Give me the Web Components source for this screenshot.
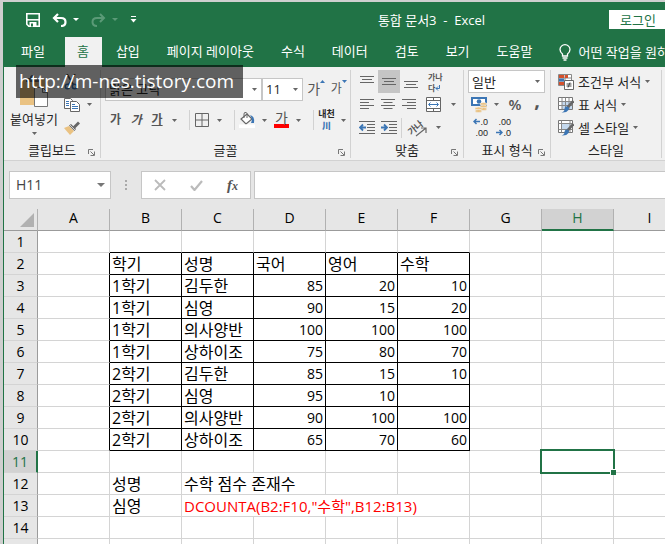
<!DOCTYPE html>
<html lang="ko">
<head>
<meta charset="utf-8">
<title>통합 문서3 - Excel</title>
<style>
  body {
    margin: 0;
    overflow: hidden;
    font-family: "Open Sans", "Noto Sans CJK KR", sans-serif;
    font-size: 13px;
    line-height: 18px;
    color: #262626;
    --green: #217346;
    --line: #d4d4d4;
  }
</style>
</head>
<body>
<excel-window>
  <title-bar>통합 문서3&nbsp; -&nbsp; Excel</title-bar>
  <ribbon-tabs></ribbon-tabs>
  <ribbon-bar></ribbon-bar>
  <formula-bar></formula-bar>
  <sheet-grid></sheet-grid>
</excel-window>
<site-mark>http://m-nes.tistory.com</site-mark>

<script>
const icons = {
  save: [14, 14, `<path d="M.8.8h12.4v12.4H2.8l-2-2z" fill="none" stroke="#fff" stroke-width="1.6"/><path d="M1 6.8h12" stroke="#fff" stroke-width="1.5"/><path d="M3.5 9h7v4.5h-7z" fill="#fff"/><path d="M5 10.5h2v3H5z" fill="#217346"/>`],
  undo: [15, 14, `<path d="M6 1 2 5l4 4M2.500 5H9q4.500 0 4.500 4T9 13" fill="none" stroke="#fff" stroke-width="2.200"/>`],
  redo: [15, 14, `<path d="m9 1 4 4-4 4M12.500 5H6Q1.500 5 1.500 9T6 13" fill="none" stroke="#5b9a77" stroke-width="2"/>`],
  custom: [7, 7, `<path d="M1 .5h5" stroke="#fff"/><path d="M.5 3h6l-3 3.500z" fill="#fff"/>`],
  bulb: [12, 17, `<path d="M3.500 12V10Q1 8 1 5.500a5 4.800 0 0 1 10 0Q11 8 8.500 10v2zM3.500 14h5M4.500 16h3" fill="none" stroke="#fff" stroke-width="1.300"/>`],
  paste: [28, 32, `<path d="M0 4h25v26H0z" fill="#eac282"/><path d="M6 7V3h4q0-3 2.500-3T15 3h4v4z" fill="#666"/><path d="M14.500 12.500h8l5 5v14h-13z" fill="#fff" stroke="#777"/><path d="M22.500 12.500v5h5" fill="none" stroke="#777"/>`],
  cut: [14, 16, `<path d="m3 0 6.500 11M11 0 4.500 11" stroke="#555" stroke-width="1.700"/><g fill="none" stroke="#3c76b5" stroke-width="1.500"><circle cx="3.500" cy="12.500" r="2.200"/><circle cx="10.500" cy="12.500" r="2.200"/></g>`],
  copy: [16, 14, `<g fill="#fff" stroke="#666"><path d="M.5.5h6l2 2v8h-8z"/><path d="M6.500 3.500h6l3 3v7h-9z"/></g><path d="M2 3.500h3M2 5.500h3M2 7.500h3M8 6.500h3M8 8.500h6M8 10.500h6" stroke="#3c76b5"/>`],
  painter: [16, 14, `<path d="m0 7 5-2 5 5-4 4z" fill="#eac282"/><path d="m5 4.500 2-1.500 5 5-1.500 2z" fill="#666"/><path d="m9 5.500 5-5 2 2-5 5z" fill="#666"/><path d="m6 4 5 5" stroke="#fff" stroke-width=".7"/>`],
  borders: [14, 14, `<path d="M.5.5h13v13H.5zM7 .5v13M.5 7h13" fill="none" stroke="#666"/>`],
  fill: [16, 16, `<path d="m8 2 5 5-6 5-5-5z" fill="#fff" stroke="#666" stroke-width="1.200"/><path d="M5 6V2q0-2 2-1.500T8 4v2" fill="none" stroke="#666"/><path d="M11 3q5 1 4 8l-3 0q2-4-1-8z" fill="#3c76b5"/><path d="M0 12.500h16v3.500H0z" fill="#fff"/>`],
  top: [14, 14, `<path d="M0 1.500h14M2 4.500h10M0 7.500h14" stroke="#666"/>`],
  middle: [14, 14, `<path d="M0 3.500h14M2 6.500h10M0 9.500h14" stroke="#666"/>`],
  bottom: [14, 14, `<path d="M0 6.500h14M2 9.500h10M0 12.500h14" stroke="#666"/>`],
  left: [14, 14, `<path d="M0 1.500h14M0 4.500h9M0 7.500h14M0 10.500h9" stroke="#666"/>`],
  center: [14, 14, `<path d="M0 1.500h14M2.500 4.500h9M0 7.500h14M2.500 10.500h9" stroke="#666"/>`],
  right: [14, 14, `<path d="M0 1.500h14M5 4.500h9M0 7.500h14M5 10.500h9" stroke="#666"/>`],
  outdent: [16, 13, `<path d="M0 .5h16M8 3.500h8M8 6.500h8M8 9.500h8M0 12.500h16" stroke="#666"/><path d="M7 6.500H1m3-3-3 3 3 3" fill="none" stroke="#3c76b5" stroke-width="1.800"/>`],
  indent: [16, 13, `<path d="M0 .5h16M8 3.500h8M8 6.500h8M8 9.500h8M0 12.500h16" stroke="#666"/><path d="M0 6.500h6M3 3.500l3 3-3 3" fill="none" stroke="#3c76b5" stroke-width="1.800"/>`],
  merge: [15, 15, `<path d="M.5.5h14v14H.5zM.5 3.500h14M.5 11.500h14M7.500.5v3M7.500 11.500v3" fill="#fff" stroke="#666"/><path d="M3 7.500h9M4.500 5.500l-2 2 2 2M10.500 5.500l2 2-2 2" fill="none" stroke="#3c76b5"/>`],
  enter: [5, 6, `<path d="M4.500 0v3.500H1M3 1.500l-2 2 2 2" fill="none" stroke="#3c76b5"/>`],
  slant: [12, 10, `<path d="m1 9 10-8M6 1h5v5" fill="none" stroke="#666" stroke-width="1.200"/>`],
  money: [17, 17, `<path d="M0 1h16v9H0z" fill="#3c76b5"/><path d="M2 3h12v5H2z" fill="#fff"/><circle cx="8" cy="5.500" r="2.300" fill="#3c76b5"/><g fill="#eac282" stroke="#f1f1f1" stroke-width=".6"><ellipse cx="12.500" cy="8" rx="3.500" ry="1.500"/><ellipse cx="12.500" cy="10.500" rx="3.500" ry="1.500"/><ellipse cx="12.500" cy="13" rx="3.500" ry="1.500"/><ellipse cx="7.500" cy="12.500" rx="3.500" ry="1.500"/><ellipse cx="7.500" cy="15" rx="3.500" ry="1.500"/></g>`],
  toLeft: [7, 7, `<path d="M7 3.500H1M3.500 1 1 3.500 3.500 6" fill="none" stroke="#3c76b5" stroke-width="1.500"/>`],
  toRight: [7, 7, `<path d="M0 3.500h6M3.500 1 6 3.500 3.500 6" fill="none" stroke="#3c76b5" stroke-width="1.500"/>`],
  cond: [16, 16, `<path d="M.5.500h13v11H.5zM.5 4h13M.5 8h13M7 .5v11" fill="#fff" stroke="#888"/><path d="M1 1h5v3H1zM1 8h5v3H1z" fill="#d4502c"/><path d="M7 1h3v3H7z" fill="#d4502c"/><path d="M1 4.500h5v3H1z" fill="#3c76b5"/><path d="M6.500 6.500h9v9h-9z" fill="#fff" stroke="#666"/><path d="M8.500 10h5M8.500 12h5M12 8.500l-2 5" stroke="#444"/>`],
  table: [16, 16, `<path d="M.5.500h14v12H.5z" fill="#fff" stroke="#777"/><path d="M4 5h10v7H4z" fill="#c5d9ee"/><path d="M.5 4.500h14M.5 8.500h14M4 .5v12M7.500.5v12M11 .5v12" stroke="#888"/><path d="m15.500 4-6 6.500" stroke="#666" stroke-width="2.600"/><path d="M9 9.500q3 1 1.500 3.500-2 3-7 2.500 3-1 3-3.500T9 9.500" fill="#3c76b5"/>`],
  cell: [16, 16, `<path d="M.5.500h14v12H.5z" fill="#fff" stroke="#777"/><path d="M3.500 3.500h9v6h-9z" fill="#c5d9ee"/><path d="M.5 3.500h14M3.500.5v12M.5 9.500h14M12 .5v12" stroke="#888" fill="none"/><path d="m15.500 4-6 6.500" stroke="#666" stroke-width="2.600"/><path d="M9 9.500q3 1 1.500 3.500-2 3-7 2.500 3-1 3-3.500T9 9.500" fill="#3c76b5"/>`],
  launcher: [7, 7, `<path d="M.5 5V.500H5" fill="none" stroke="#777"/><path d="M2.500 2.500 6 6M6.500 2.500v4h-4" fill="none" stroke="#777"/>`],
  arrow: [5, 3, `<path d="M0 0h5L2.500 3z" fill="#666"/>`],
  bigArrow: [8, 4, `<path d="M0 0h8L4 4z" fill="#777"/>`],
  up: [5, 3, `<path d="M0 3h5L2.500 0z" fill="#3c76b5"/>`],
  down: [5, 3, `<path d="M0 0h5L2.500 3z" fill="#3c76b5"/>`],
  cancel: [12, 12, `<path d="m1 1 10 10M11 1 1 11" stroke="#bbb" stroke-width="1.800"/>`],
  ok: [13, 11, `<path d="m1 6 3.500 4L12 1" fill="none" stroke="#bbb" stroke-width="2.200"/>`],
  corner: [14, 14, `<path d="M14 0v14H0z" fill="#b1b1b1"/>`],
};

class UiIcon extends HTMLElement {
  connectedCallback() {
    const [w, h, body] = icons[this.getAttribute('name')];
    this.attachShadow({ mode: 'open' }).innerHTML = `
      <style>
        :host { display: inline-flex; flex: none; }
        svg { display: block; }
      </style>
      <svg width="${w}" height="${h}" viewBox="0 0 ${w} ${h}" aria-hidden="true">${body}</svg>`;
  }
}

class ExcelWindow extends HTMLElement {
  constructor() {
    super();
    this.attachShadow({ mode: 'open' }).innerHTML = `
      <style>
        :host {
          display: flex;
          flex-direction: column;
          box-sizing: border-box;
          height: 100vh;
          border: solid #cfcfcf;
          border-width: 2px 0 0 3px;
        }
        .frame {
          display: flex;
          flex-direction: column;
          flex: 1;
          min-height: 0;
          overflow: hidden;
          border-left: 1px solid var(--green);
        }
      </style>
      <div class="frame"><slot></slot></div>`;
  }
}

class TitleBar extends HTMLElement {
  constructor() {
    super();
    this.attachShadow({ mode: 'open' }).innerHTML = `
      <style>
        :host {
          display: flex;
          align-items: center;
          height: 35px;
          flex: none;
          color: #fff;
          background: var(--green);
        }
        .tools {
          display: flex;
          align-items: center;
          flex: 0 0 250px;
          box-sizing: border-box;
          padding-left: 22px;
        }
        button {
          display: flex;
          align-items: center;
          gap: 6px;
          padding: 0;
          margin-right: 12px;
          border: 0;
          background: none;
        }
        .title { flex: 1; text-align: center; }
        .login {
          flex: none;
          width: 56px;
          height: 19px;
          padding-left: 11px;
          margin: 0;
          font: inherit;
          line-height: 18px;
          color: var(--green);
          background: #fff;
        }
        i { border: solid transparent; border-width: 3px 3px 0; border-top-color: #fff; }
        .off i { border-top-color: #5b9a77; }
      </style>
      <div class="tools">
        <button aria-label="저장"><ui-icon name="save"></ui-icon></button>
        <button aria-label="실행 취소">
          <ui-icon name="undo"></ui-icon><i></i>
        </button>
        <button aria-label="다시 실행" class="off">
          <ui-icon name="redo"></ui-icon><i></i>
        </button>
        <button aria-label="도구 모음 사용자 지정"><ui-icon name="custom"></ui-icon></button>
      </div>
      <span class="title"><slot></slot></span>
      <button class="login">로그인</button>`;
  }
}

class RibbonTabs extends HTMLElement {
  constructor() {
    super();
    this.attachShadow({ mode: 'open' }).innerHTML = `
      <style>
        :host {
          display: flex;
          flex: none;
          height: 30px;
          overflow: hidden;
          white-space: nowrap;
          background: var(--green);
        }
        a {
          flex: none;
          padding: 0 13px 0 14px;
          line-height: 28px;
          color: #fff;
          text-decoration: none;
        }
        a.file { padding: 0 20px 0 17px; }
        a.active { padding: 0 13px 0 12px; color: var(--green); background: #f1f1f1; }
        a.tell { display: flex; align-items: center; gap: 7px; padding-right: 0; }
      </style>
      <a href="#" class="file">파일</a>
      <a href="#" class="active">홈</a>
      <a href="#">삽입</a>
      <a href="#">페이지 레이아웃</a>
      <a href="#">수식</a>
      <a href="#">데이터</a>
      <a href="#">검토</a>
      <a href="#">보기</a>
      <a href="#">도움말</a>
      <a href="#" class="tell"><ui-icon name="bulb"></ui-icon>어떤 작업을 원하</a>`;
  }
}

class RibbonGroup extends HTMLElement {
  connectedCallback() {
    const launcher = this.hasAttribute('plain') ? '' : '<button aria-label="자세히"><ui-icon name="launcher"></ui-icon></button>';
    this.attachShadow({ mode: 'open' }).innerHTML = `
      <style>
        :host {
          display: flex;
          flex-direction: column;
          flex: none;
          box-sizing: border-box;
          height: 88px;
          border-right: 1px solid #d2d2d2;
        }
        .body { flex: 1; }
        .foot { display: grid; grid-template-columns: 12px 1fr 12px; align-items: center; line-height: 16px; }
        .label { grid-column: 2; text-align: center; }
        button { display: flex; padding: 4px 0 0; border: 0; background: none; }
      </style>
      <div class="body"><slot></slot></div>
      <div class="foot"><span class="label">${this.getAttribute('label')}</span>${launcher}</div>`;
  }
}

class RibbonBar extends HTMLElement {
  constructor() {
    super();
    this.attachShadow({ mode: 'open' }).innerHTML = `
      <style>
        :host {
          display: flex;
          flex: none;
          box-sizing: border-box;
          height: 94px;
          padding-top: 3px;
          overflow: hidden;
          background: #f1f1f1;
          border-bottom: 1px solid #d2d2d2;
        }
        button, select { font: inherit; color: inherit; }
        button {
          display: inline-flex;
          align-items: center;
          justify-content: center;
          padding: 0;
          border: 0;
          background: none;
          white-space: nowrap;
        }
        .row { display: flex; align-items: center; height: 23px; }
        .sep { width: 1px; height: 20px; background: #d2d2d2; }
        .box { display: grid; align-items: center; }
        .box > * { grid-area: 1 / 1; }
        .box ui-icon { justify-self: end; margin-right: 5px; pointer-events: none; }
        select {
          width: 100%;
          height: 23px;
          box-sizing: border-box;
          padding: 0 3px;
          border: 1px solid #c6c6c6;
          border-radius: 0;
          appearance: none;
          background: #fff;
        }

        .clip { width: 97px; }
        .clip-in { display: grid; grid-template-columns: 58px 1fr; }
        .paste { flex-direction: column; gap: 3px; padding-left: 2px; }
        .paste ui-icon:last-child { margin-top: 1px; }
        .side { display: flex; flex-direction: column; align-items: flex-start; padding-left: 2px; }
        .side button { height: 23px; gap: 7px; }

        .font { width: 250px; }
        .fonts { height: 22px; padding: 8px 0 0 4px; }
        .name { flex: 0 0 157px; }
        .size { flex: 0 0 41px; }
        .fonts button { align-items: flex-start; width: 24px; margin-left: 2px; font-size: 14px; color: #555; }
        .fonts button + button { margin: 0; }
        .fonts .small { font-size: 12px; }
        .style { height: 22px; padding: 9px 0 0 4px; }
        .style button { width: 22px; height: 20px; }
        .style .drop { width: 14px; }
        .style .sep { margin: 0 2px 0 8px; }
        .ga { font-size: 12px; font-weight: bold; line-height: 14px; color: #555; }
        .red { border-bottom: 4px solid #f00; font-size: 14px; line-height: 12px; padding: 0 1px; color: #555; }
        .style .text { height: 24px; font-size: 9px; line-height: 12px; flex-direction: column; font-weight: bold; }
        .text b { color: #3c76b5; }

        .align { width: 113px; }
        .align .row { padding-left: 5px; }
        .align button { width: 22px; height: 23px; }
        .align .on { background: #c5c5c5; }
        .align .wrap { width: 20px; margin-left: 6px; font-size: 8px; font-weight: bold; line-height: 11px; color: #555; text-align: left; display: block; }
        .align .merge { width: 20px; margin-left: 4px; }
        .align .drop { width: 20px; }
        .align .sep { margin: 0 4px 0 1px; }
        .tilts { display: grid; justify-items: start; }
        .tilts > * { grid-area: 1 / 1; }
        .tilts ui-icon { margin: 8px 0 0 8px; }
        .tilt { font-size: 9px; font-weight: bold; line-height: 9px; color: #555; transform: rotate(-40deg); }

        .num { width: 87px; }
        .num .row { padding: 0 5px 0 4px; }
        .num .box { flex: 1; }
        .num button { margin-left: 3px; }
        .num .drop { width: 16px; margin: 0; }
        .num .pct { width: 22px; padding-bottom: 2px; margin: 0; font-size: 15px; font-weight: 600; color: #555; }
        .num .comma { width: 16px; padding-bottom: 10px; font-size: 20px; font-weight: bold; color: #555; }
        .num .dec { display: block; width: 17px; font: 9px/11px "Liberation Sans", sans-serif; text-align: right; }
        .num .dec + .dec { margin-left: 6px; }

        .look { width: 111px; }
        .look .row { padding-left: 7px; }
        .look button { gap: 4px; }
      </style>
      <ribbon-group class="clip" label="클립보드">
        <div class="clip-in">
          <button class="paste"><ui-icon name="paste"></ui-icon>붙여넣기<ui-icon name="arrow"></ui-icon></button>
          <div class="side">
            <button aria-label="잘라내기"><ui-icon name="cut"></ui-icon></button>
            <button aria-label="복사"><ui-icon name="copy"></ui-icon><ui-icon name="arrow"></ui-icon></button>
            <button aria-label="서식 복사"><ui-icon name="painter"></ui-icon></button>
          </div>
        </div>
      </ribbon-group>
      <ribbon-group class="font" label="글꼴">
        <div class="row fonts">
          <span class="box name"><select aria-label="글꼴"><option>맑은 고딕</option></select><ui-icon name="arrow"></ui-icon></span>
          <span class="box size"><select aria-label="글꼴 크기"><option>11</option></select><ui-icon name="arrow"></ui-icon></span>
          <button>가<ui-icon name="up"></ui-icon></button>
          <button class="small">가<ui-icon name="down"></ui-icon></button>
        </div>
        <div class="row style">
          <button class="ga">가</button>
          <button class="ga"><i>가</i></button>
          <button class="ga"><u>가</u></button>
          <button class="drop" aria-label="밑줄"><ui-icon name="arrow"></ui-icon></button>
          <span class="sep"></span>
          <button aria-label="테두리"><ui-icon name="borders"></ui-icon></button>
          <button class="drop" aria-label="테두리 종류"><ui-icon name="arrow"></ui-icon></button>
          <span class="sep"></span>
          <button aria-label="채우기 색"><ui-icon name="fill"></ui-icon></button>
          <button class="drop" aria-label="채우기 색 종류"><ui-icon name="arrow"></ui-icon></button>
          <button><span class="red">가</span></button>
          <button class="drop" aria-label="글꼴 색"><ui-icon name="arrow"></ui-icon></button>
          <span class="sep"></span>
          <button class="text">내천<b>川</b></button>
          <button class="drop" aria-label="윗주"><ui-icon name="arrow"></ui-icon></button>
        </div>
      </ribbon-group>
      <ribbon-group class="align" label="맞춤">
        <div class="row">
          <button aria-label="위쪽 맞춤"><ui-icon name="top"></ui-icon></button>
          <button aria-label="가운데 맞춤" class="on"><ui-icon name="middle"></ui-icon></button>
          <button aria-label="아래쪽 맞춤"><ui-icon name="bottom"></ui-icon></button>
          <button class="wrap">가나<br>다<ui-icon name="enter"></ui-icon></button>
        </div>
        <div class="row">
          <button aria-label="왼쪽"><ui-icon name="left"></ui-icon></button>
          <button aria-label="가운데"><ui-icon name="center"></ui-icon></button>
          <button aria-label="오른쪽"><ui-icon name="right"></ui-icon></button>
          <button class="merge" aria-label="병합"><ui-icon name="merge"></ui-icon></button>
          <button class="drop" aria-label="병합 종류"><ui-icon name="arrow"></ui-icon></button>
        </div>
        <div class="row">
          <button aria-label="내어쓰기"><ui-icon name="outdent"></ui-icon></button>
          <button aria-label="들여쓰기"><ui-icon name="indent"></ui-icon></button>
          <span class="sep"></span>
          <button class="tilts"><span class="tilt">가나</span><ui-icon name="slant"></ui-icon></button>
          <button class="drop" aria-label="방향"><ui-icon name="arrow"></ui-icon></button>
        </div>
      </ribbon-group>
      <ribbon-group class="num" label="표시 형식">
        <div class="row">
          <span class="box"><select aria-label="표시 형식"><option>일반</option></select><ui-icon name="arrow"></ui-icon></span>
        </div>
        <div class="row">
          <button aria-label="회계"><ui-icon name="money"></ui-icon></button>
          <button class="drop" aria-label="통화"><ui-icon name="arrow"></ui-icon></button>
          <button class="pct">%</button>
          <button class="comma">,</button>
        </div>
        <div class="row">
          <button class="dec"><ui-icon name="toLeft"></ui-icon>.0<br>.00</button>
          <button class="dec">.00<br><ui-icon name="toRight"></ui-icon>.0</button>
        </div>
      </ribbon-group>
      <ribbon-group class="look" label="스타일" plain>
        <div class="row"><button><ui-icon name="cond"></ui-icon>조건부 서식<ui-icon name="arrow"></ui-icon></button></div>
        <div class="row"><button><ui-icon name="table"></ui-icon>표 서식<ui-icon name="arrow"></ui-icon></button></div>
        <div class="row"><button><ui-icon name="cell"></ui-icon>셀 스타일<ui-icon name="arrow"></ui-icon></button></div>
      </ribbon-group>`;
  }
}

class FormulaBar extends HTMLElement {
  constructor() {
    super();
    this.attachShadow({ mode: 'open' }).innerHTML = `
      <style>
        :host {
          display: flex;
          flex: none;
          height: 28px;
          padding: 10px 0 10px 5px;
          background: #e6e6e6;
        }
        .name, .tools, .formula {
          display: flex;
          align-items: center;
          box-sizing: border-box;
          border: 1px solid #c6c6c6;
          background: #fff;
        }
        .name { width: 102px; padding-right: 5px; }
        .tools { width: 110px; justify-content: space-between; padding: 0 12px; }
        .formula { flex: 1; margin-left: 3px; border-right: 0; }
        input {
          flex: 1;
          min-width: 0;
          padding: 0 6px;
          border: 0;
          background: none;
          font: inherit;
          font-size: 14px;
          color: #444;
          outline: 0;
        }
        button { display: flex; padding: 0; border: 0; background: none; }
        .fx { font: italic bold 15px "Liberation Serif", serif; color: #555; }
        .fx small { font-size: 12px; align-self: flex-end; }
        .dots { display: grid; align-content: center; gap: 2px; margin: 0 14px; }
        .dots i { width: 2px; height: 2px; background: #aaa; }
      </style>
      <div class="name">
        <input aria-label="이름 상자" value="H11">
        <button aria-label="이름 목록"><ui-icon name="bigArrow"></ui-icon></button>
      </div>
      <div class="dots"><i></i><i></i><i></i></div>
      <div class="tools">
        <button aria-label="취소"><ui-icon name="cancel"></ui-icon></button>
        <button aria-label="입력"><ui-icon name="ok"></ui-icon></button>
        <button class="fx">f<small>x</small></button>
      </div>
      <div class="formula"><input aria-label="수식 입력줄"></div>`;
  }
}

const COLS = 'ABCDEFGHI';
const LAST_ROW = 15;
const data = {
  2: ['학기', '성명', '국어', '영어', '수학'],
  3: ['1학기', '김두한', 85, 20, 10],
  4: ['1학기', '심영', 90, 15, 20],
  5: ['1학기', '의사양반', 100, 100, 100],
  6: ['1학기', '상하이조', 75, 80, 70],
  7: ['2학기', '김두한', 85, 15, 10],
  8: ['2학기', '심영', 95, 10, ''],
  9: ['2학기', '의사양반', 90, 100, 100],
  10: ['2학기', '상하이조', 65, 70, 60],
};

class SheetGrid extends HTMLElement {
  constructor() {
    super();
    this.attachShadow({ mode: 'open' }).innerHTML = `
      <style>
        :host {
          display: block;
          flex: 1;
          overflow: hidden;
          background: #fff;
        }
        table {
          width: 682px;
          table-layout: fixed;
          border-spacing: 0;
          color: #000;
        }
        col { width: 72px; }
        col:first-child { width: 34px; }
        th, td {
          box-sizing: border-box;
          height: 22px;
          padding: 0 2px;
          line-height: 20px;
          white-space: nowrap;
          border: solid var(--line);
          border-width: 0 1px 1px 0;
        }
        th {
          font-size: 14px;
          font-weight: normal;
          background: #e6e6e6;
          border-right-color: #9b9b9b;
        }
        thead th {
          padding-bottom: 4px;
          border-right-color: #b1b1b1;
          border-bottom-color: #9b9b9b;
          line-height: 16px;
        }
        td { font-size: 16px; }
        td.n { font-size: 14px; text-align: right; }
        .kr { border-right-color: #000; }
        .kb { border-bottom-color: #000; }
        .sel { color: var(--green); background: #d2d2d2; }
        thead .sel { padding-bottom: 3px; border-bottom: 2px solid var(--green); }
        tbody .sel { border-right: 2px solid var(--green); }
        .formula { font-size: 15px; color: #f00; }
        thead .corner { vertical-align: bottom; padding: 0 3px 3px; text-align: right; line-height: 0; }
        .current { position: relative; }
        .current::before {
          content: "";
          position: absolute;
          inset: -2px;
          border: 2px solid var(--green);
        }
        .current::after {
          content: "";
          position: absolute;
          right: -3px;
          bottom: -3px;
          width: 5px;
          height: 5px;
          background: var(--green);
          border: solid #fff;
          border-width: 1px 0 0 1px;
        }
      </style>
      <table>
        <colgroup><col>${'<col>'.repeat(COLS.length)}</colgroup>
        <thead><tr>
          <th class="corner"><ui-icon name="corner"></ui-icon></th>
          ${[...COLS].map((c) => `<th scope="col" class="${c === 'H' ? 'sel' : ''}">${c}</th>`).join('')}
        </tr></thead>
        <tbody></tbody>
      </table>`;

    const body = this.shadowRoot.querySelector('tbody');
    for (let row = 1; row <= LAST_ROW; row++) {
      body.appendChild(this.buildRow(row));
    }
  }

  buildRow(row) {
    const tr = document.createElement('tr');
    const head = document.createElement('th');
    head.scope = 'row';
    head.textContent = row < LAST_ROW ? row : '';
    if (row === 11) head.className = 'sel';
    tr.appendChild(head);

    for (let col = 0; col < COLS.length; col++) {
      const td = document.createElement('td');
      const value = data[row]?.[col - 1];
      if (value !== undefined) {
        td.textContent = value;
        if (typeof value === 'number') td.classList.add('n');
      }
      // the score table B2:F10 has black borders
      if (row >= 2 && row <= 10 && col <= 5) td.classList.add('kr');
      if (row >= 1 && row <= 10 && col >= 1 && col <= 5) td.classList.add('kb');
      if (row === 11 && col === 7) td.classList.add('current');

      if (row === 12 && col === 1) td.textContent = '성명';
      if (row === 13 && col === 1) td.textContent = '심영';
      if (row === 12 && col === 2) {
        td.textContent = '수학 점수 존재수';
        td.colSpan = 2;
        col += 1;
      }
      if (row === 13 && col === 2) {
        td.textContent = 'DCOUNTA(B2:F10,"수학",B12:B13)';
        td.className = 'formula';
        td.colSpan = 4;
        col += 3;
      }
      tr.appendChild(td);
    }
    return tr;
  }
}

class SiteMark extends HTMLElement {
  constructor() {
    super();
    this.attachShadow({ mode: 'open' }).innerHTML = `
      <style>
        :host {
          position: absolute;
          top: 65px;
          left: 16px;
          padding: 0 9px 0 3px;
          font-size: 19px;
          line-height: 33px;
          color: #fff;
          background: rgba(0, 0, 0, .6);
        }
      </style>
      <slot></slot>`;
  }
}

customElements.define('ui-icon', UiIcon);
customElements.define('excel-window', ExcelWindow);
customElements.define('title-bar', TitleBar);
customElements.define('ribbon-tabs', RibbonTabs);
customElements.define('ribbon-group', RibbonGroup);
customElements.define('ribbon-bar', RibbonBar);
customElements.define('formula-bar', FormulaBar);
customElements.define('sheet-grid', SheetGrid);
customElements.define('site-mark', SiteMark);
</script>
</body>
</html>
